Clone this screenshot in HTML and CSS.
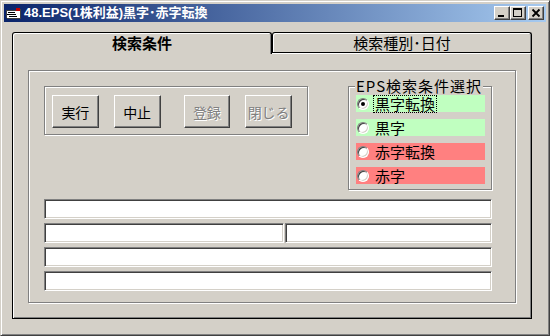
FILE: index.html
```html
<!DOCTYPE html>
<html lang="ja">
<head>
<meta charset="UTF-8" />
<title>48.EPS(1株利益)黒字･赤字転換</title>
<link rel="stylesheet" href="styles.css">
</head>
<body>

<div class="window">
  <div class="titlebar">
    <svg class="app-icon" width="16" height="16" viewBox="0 0 16 16" shape-rendering="crispEdges">
      <polygon points="1,5 11,5 11,4 15,4 15,13 2,13 1,12" fill="#fff" stroke="#404040" stroke-width="1"/>
      <rect x="11" y="3" width="4" height="3" fill="#c00000"/>
      <rect x="3" y="7" width="7" height="1" fill="#000"/>
      <rect x="2" y="9" width="9" height="1" fill="#000"/>
      <rect x="4" y="11" width="8" height="1" fill="#000"/>
    </svg>
    <span class="title">48.EPS(1株利益)黒字･赤字転換</span>
    <div class="caption-buttons">
      <span class="cbtn">
        <svg width="14" height="12" viewBox="0 0 14 12" shape-rendering="crispEdges"><rect x="3" y="8" width="6" height="2" fill="#000"/></svg>
      </span>
      <span class="cbtn">
        <svg width="14" height="12" viewBox="0 0 14 12" shape-rendering="crispEdges"><rect x="2.5" y="1.5" width="8" height="8" fill="none" stroke="#000"/><rect x="2" y="1" width="9" height="2" fill="#000"/></svg>
      </span>
      <span class="cbtn close">
        <svg width="14" height="12" viewBox="0 0 14 12"><path d="M3.5 2.5 L10.5 9.5 M10.5 2.5 L3.5 9.5" stroke="#000" stroke-width="1.8"/></svg>
      </span>
    </div>
  </div>

  <div class="client">
    <div class="tabs">
      <div class="tab active">検索条件</div>
      <div class="tab">検索種別･日付</div>
    </div>

    <div class="panel">
      <div class="frame">
        <div class="top-row">
          <div class="btn-group">
            <button class="btn">実行</button>
            <button class="btn">中止</button>
            <button class="btn wide-gap" disabled>登録</button>
            <button class="btn" disabled>閉じる</button>
          </div>

          <div class="eps">
            <span class="eps-caption">EPS検索条件選択</span>
            <div class="opt green"><span class="radio checked"></span><span class="opt-text focus">黒字転換</span></div>
            <div class="opt green"><span class="radio"></span><span class="opt-text">黒字</span></div>
            <div class="opt red"><span class="radio"></span><span class="opt-text">赤字転換</span></div>
            <div class="opt red"><span class="radio"></span><span class="opt-text">赤字</span></div>
          </div>
        </div>

        <div class="fields">
          <div class="field"></div>
          <div class="field-row">
            <div class="field left"></div>
            <div class="field right"></div>
          </div>
          <div class="field"></div>
          <div class="field"></div>
        </div>
      </div>
    </div>
  </div>
</div>

</body>
</html>
```

FILE: styles.css
```css
body {
  margin: 0;
  background: #d4d0c8;
  font-family: "Noto Sans CJK JP", sans-serif;
  color: #000;
}

.window {
  width: 550px;
  height: 336px;
  box-sizing: border-box;
  border: 1px solid;
  border-color: #d4d0c8 #404040 #404040 #d4d0c8;
  box-shadow: inset 1px 1px #fff, inset -1px -1px #808080;
  padding: 3px;
  background: #d4d0c8;
}

/* title bar */
.titlebar {
  height: 18px;
  display: flex;
  align-items: center;
  background: linear-gradient(to right, #0a246a, #a6caf0);
}
.app-icon {
  margin-left: 1px;
  margin-right: 3px;
}
.title {
  color: #fff;
  font-family: "Liberation Sans", "Noto Sans CJK JP", sans-serif;
  font-weight: bold;
  font-size: 13px;
  line-height: 18px;
  white-space: nowrap;
}
.caption-buttons {
  margin-left: auto;
  margin-right: 2px;
  display: flex;
}
.cbtn {
  width: 16px;
  height: 14px;
  box-sizing: border-box;
  background: #d4d0c8;
  border: 1px solid;
  border-color: #fff #404040 #404040 #fff;
  box-shadow: inset -1px -1px #808080;
  display: flex;
}
.cbtn.close {
  margin-left: 2px;
}

/* tabs */
.client {
  padding: 10px 0 0 8px;
}
.tabs {
  display: flex;
  height: 20px;
}
.tab {
  width: 260px;
  height: 20px;
  box-sizing: border-box;
  border: 1px solid #000;
  border-bottom: 0;
  border-radius: 3px 3px 0 0;
  box-shadow: inset 1px 1px #fff, inset -1px 0 #808080;
  background: #d4d0c8;
  font-size: 15px;
  line-height: 19px;
  text-align: center;
}
.tab.active {
  position: relative;
  z-index: 1;
  height: 22px;
  font-weight: bold;
}
.panel {
  width: 520px;
  height: 267px;
  box-sizing: border-box;
  border: 1px solid #000;
  box-shadow: inset 1px 1px #fff, inset -1px -1px #808080;
  padding: 17px 15px 0 15px;
}

/* etched frames */
.frame {
  width: 488px;
  height: 233px;
  box-sizing: border-box;
  border: 1px solid #808080;
  box-shadow: inset 1px 1px #fff, 1px 1px #fff;
  padding: 15px 0 0 15px;
}
.top-row {
  display: flex;
  align-items: flex-start;
}
.btn-group {
  width: 264px;
  height: 49px;
  box-sizing: border-box;
  border: 1px solid #808080;
  box-shadow: inset 1px 1px #fff, 1px 1px #fff;
  padding: 8px 0 0 7px;
  display: flex;
}
.btn {
  width: 49px;
  height: 33px;
  margin: 0 15px 0 0;
  padding: 0;
  box-sizing: border-box;
  background: #d4d0c8;
  border: 1px solid;
  border-color: #fff #404040 #404040 #fff;
  box-shadow: inset -1px -1px #808080;
  font-family: "Noto Sans CJK JP", sans-serif;
  font-size: 14px;
  color: #000;
}
.btn.wide-gap {
  margin-left: 8px;
}
.btn:disabled {
  color: #808080;
  text-shadow: 1px 1px #fff;
}

/* EPS option frame */
.eps {
  position: relative;
  margin-left: 40px;
  width: 144px;
  height: 104px;
  box-sizing: border-box;
  border: 1px solid #808080;
  box-shadow: inset 1px 1px #fff, 1px 1px #fff;
  padding: 8px 0 0 7px;
  display: flex;
  flex-direction: column;
  gap: 7px;
}
.eps-caption {
  position: absolute;
  left: 6px;
  top: -8px;
  padding: 0 1px;
  background: #d4d0c8;
  font-size: 15px;
  line-height: 14px;
  letter-spacing: 1px;
  white-space: nowrap;
}
.opt {
  width: 129px;
  height: 17px;
  display: flex;
  align-items: center;
  font-size: 15px;
  line-height: 16px;
}
.opt.green {
  background: #c0ffc0;
}
.opt.red {
  background: #ff8080;
}
.radio {
  position: relative;
  width: 12px;
  height: 12px;
  box-sizing: border-box;
  margin: 0 6px 0 1px;
  border-radius: 50%;
  background: #fff;
  border: 1px solid;
  border-color: #808080 #fff #fff #808080;
  box-shadow: inset 1px 1px #404040, inset -1px -1px #d4d0c8;
}
.radio.checked::after {
  content: "";
  position: absolute;
  left: 3px;
  top: 3px;
  width: 4px;
  height: 4px;
  border-radius: 50%;
  background: #000;
}
.opt-text {
  padding: 0 1px;
  margin-left: -1px;
}
.opt-text.focus {
  outline: 1px dotted #000;
}

/* text boxes */
.fields {
  margin-top: 9px;
  display: flex;
  flex-direction: column;
  gap: 4px;
}
.field-row {
  display: flex;
  gap: 1px;
}
.field {
  width: 448px;
  height: 20px;
  box-sizing: border-box;
  background: #fff;
  border: 1px solid;
  border-color: #808080 #fff #fff #808080;
  box-shadow: inset 1px 1px #404040, inset -1px -1px #d4d0c8;
}
.field.left {
  width: 240px;
}
.field.right {
  width: 207px;
}
```
